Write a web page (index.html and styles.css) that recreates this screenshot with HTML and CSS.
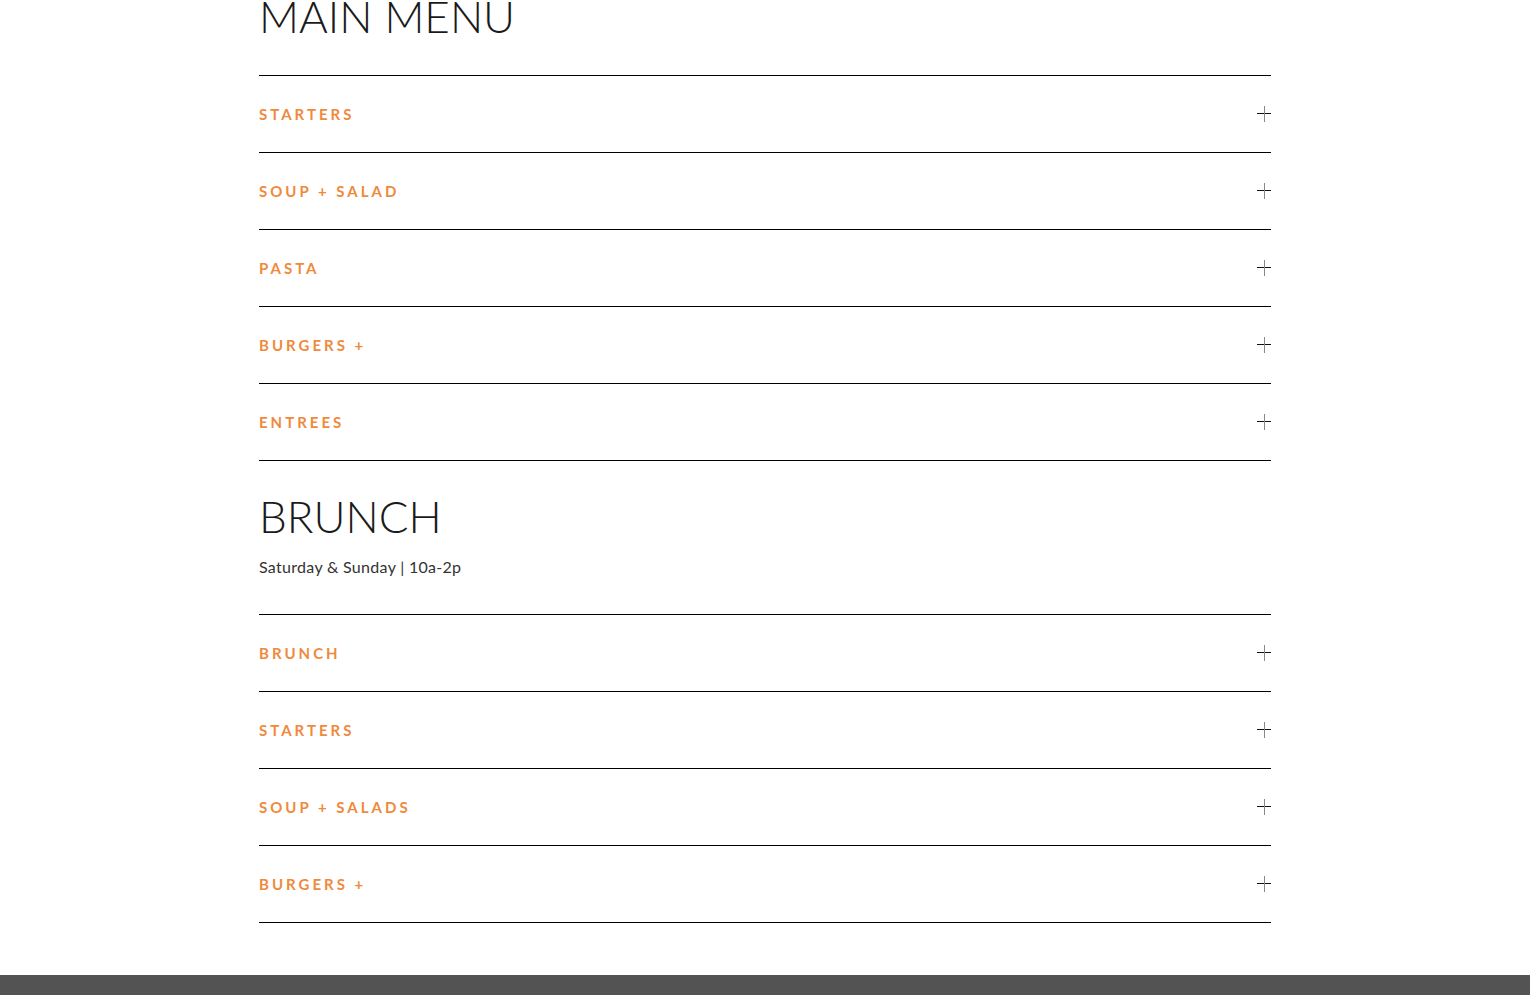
FILE: index.html
```html
<!DOCTYPE html>
<html>
<head>
<meta charset="utf-8">
<link rel="stylesheet" href="styles.css">
</head>
<body>
<main class="wrap">
  <h1 class="title title-main">MAIN MENU</h1>
  <ul class="menu">
    <li class="row"><span class="label">STARTERS</span><span class="plus"></span></li>
    <li class="row"><span class="label">SOUP + SALAD</span><span class="plus"></span></li>
    <li class="row"><span class="label">PASTA</span><span class="plus"></span></li>
    <li class="row"><span class="label">BURGERS +</span><span class="plus"></span></li>
    <li class="row"><span class="label">ENTREES</span><span class="plus"></span></li>
  </ul>
  <h2 class="title title-brunch">BRUNCH</h2>
  <p class="hours">Saturday &amp; Sunday | 10a-2p</p>
  <ul class="menu">
    <li class="row"><span class="label">BRUNCH</span><span class="plus"></span></li>
    <li class="row"><span class="label">STARTERS</span><span class="plus"></span></li>
    <li class="row"><span class="label">SOUP + SALADS</span><span class="plus"></span></li>
    <li class="row"><span class="label">BURGERS +</span><span class="plus"></span></li>
  </ul>
</main>
<footer class="footer"></footer>
</body>
</html>
```
FILE: styles.css
```css
html, body {
  margin: 0;
  padding: 0;
  background: #fff;
}
body {
  font-family: "Lato", "Open Sans", sans-serif;
  color: #222;
}
.wrap {
  width: 1012px;
  margin: 0 auto;
  padding-bottom: 52px;
}
.title {
  margin: 0;
  font-family: "Lato", sans-serif;
  font-weight: 300;
  color: #1a1a1a;
  letter-spacing: 0;
  line-height: 1;
}
.title-main {
  font-size: 44px;
  margin-top: -6px;
  height: 81px;
}
.title-brunch {
  font-size: 44px;
  margin-top: 33px;
}
.hours {
  margin: 19px 0 37px;
  font-size: 16px;
  letter-spacing: 0.3px;
  color: #333;
  line-height: 20px;
}
.menu {
  list-style: none;
  margin: 0;
  padding: 0;
  border-top: 1px solid #000;
}
.row {
  height: 76px;
  border-bottom: 1px solid #000;
  display: flex;
  align-items: center;
  justify-content: space-between;
}
.label {
  color: #ef8a3c;
  font-size: 15px;
  font-weight: 700;
  letter-spacing: 3px;
  margin-top: -1px;
}
.plus {
  position: relative;
  width: 14px;
  height: 16px;
}
.plus::before {
  content: "";
  position: absolute;
  left: 0;
  right: 0;
  top: 7px;
  height: 1px;
  background: #111;
}
.plus::after {
  content: "";
  position: absolute;
  left: 7px;
  top: 0;
  bottom: 0;
  width: 1px;
  background: #888;
}
.footer {
  height: 20px;
  background: #535353;
}
```
